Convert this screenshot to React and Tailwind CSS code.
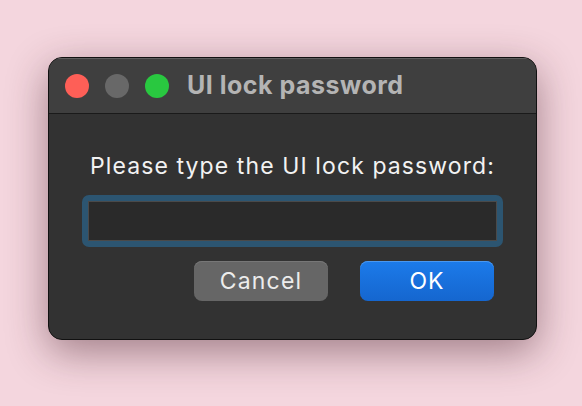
import React from 'react';

const App = () => {
  return (
    <div
      className="w-[582px] h-[406px] bg-[#f4d6de] pt-[57px] pl-[48px]"
      style={{ fontFamily: 'Inter, "Liberation Sans", Arial, sans-serif' }}
    >
      <div className="w-[489px] h-[283px] rounded-[14px] bg-[#323232] border border-[#111] shadow-[0_12px_40px_rgba(60,20,30,0.45)] overflow-hidden flex flex-col">
        <div className="h-[56px] shrink-0 bg-[#3f3f3f] border-b border-[#1a1a1a] shadow-[inset_0_1px_0_#5e5e5e] flex items-center pl-[16px]">
          <span className="w-[24px] h-[24px] rounded-full bg-[#fe5f57]" />
          <span className="w-[24px] h-[24px] rounded-full bg-[#686868] ml-[16px]" />
          <span className="w-[24px] h-[24px] rounded-full bg-[#29c840] ml-[16px]" />
          <span className="ml-[18px] text-[25px] font-bold tracking-[0.5px] text-[#b4b4b4] leading-none">UI lock password</span>
        </div>
        <div className="flex flex-col items-stretch px-[33px] pt-[40px]">
          <div className="text-center text-[23px] tracking-[1.1px] text-[#f2f2f2] leading-[25px] -mx-[20px]">
            Please type the UI lock password:
          </div>
          <div className="mt-[16px] h-[52px] rounded-[7px] bg-[#2c5571] p-[6px]">
            <div className="h-full bg-[#2a2a2a] border border-[#4a4a4a]" />
          </div>
          <div className="mt-[14px] flex justify-end gap-[32px] pr-[9px]">
            <button className="w-[134px] h-[40px] rounded-[8px] bg-[#666666] text-[23px] tracking-[1.2px] text-[#ececec] shadow-[inset_0_1px_0_#777]">
              Cancel
            </button>
            <button className="w-[134px] h-[40px] rounded-[8px] bg-gradient-to-b from-[#1c7bea] to-[#1566cf] text-[23px] tracking-[1px] text-white shadow-[inset_0_1px_0_#4a98f0]">
              OK
            </button>
          </div>
        </div>
      </div>
    </div>
  );
};

export default App;
